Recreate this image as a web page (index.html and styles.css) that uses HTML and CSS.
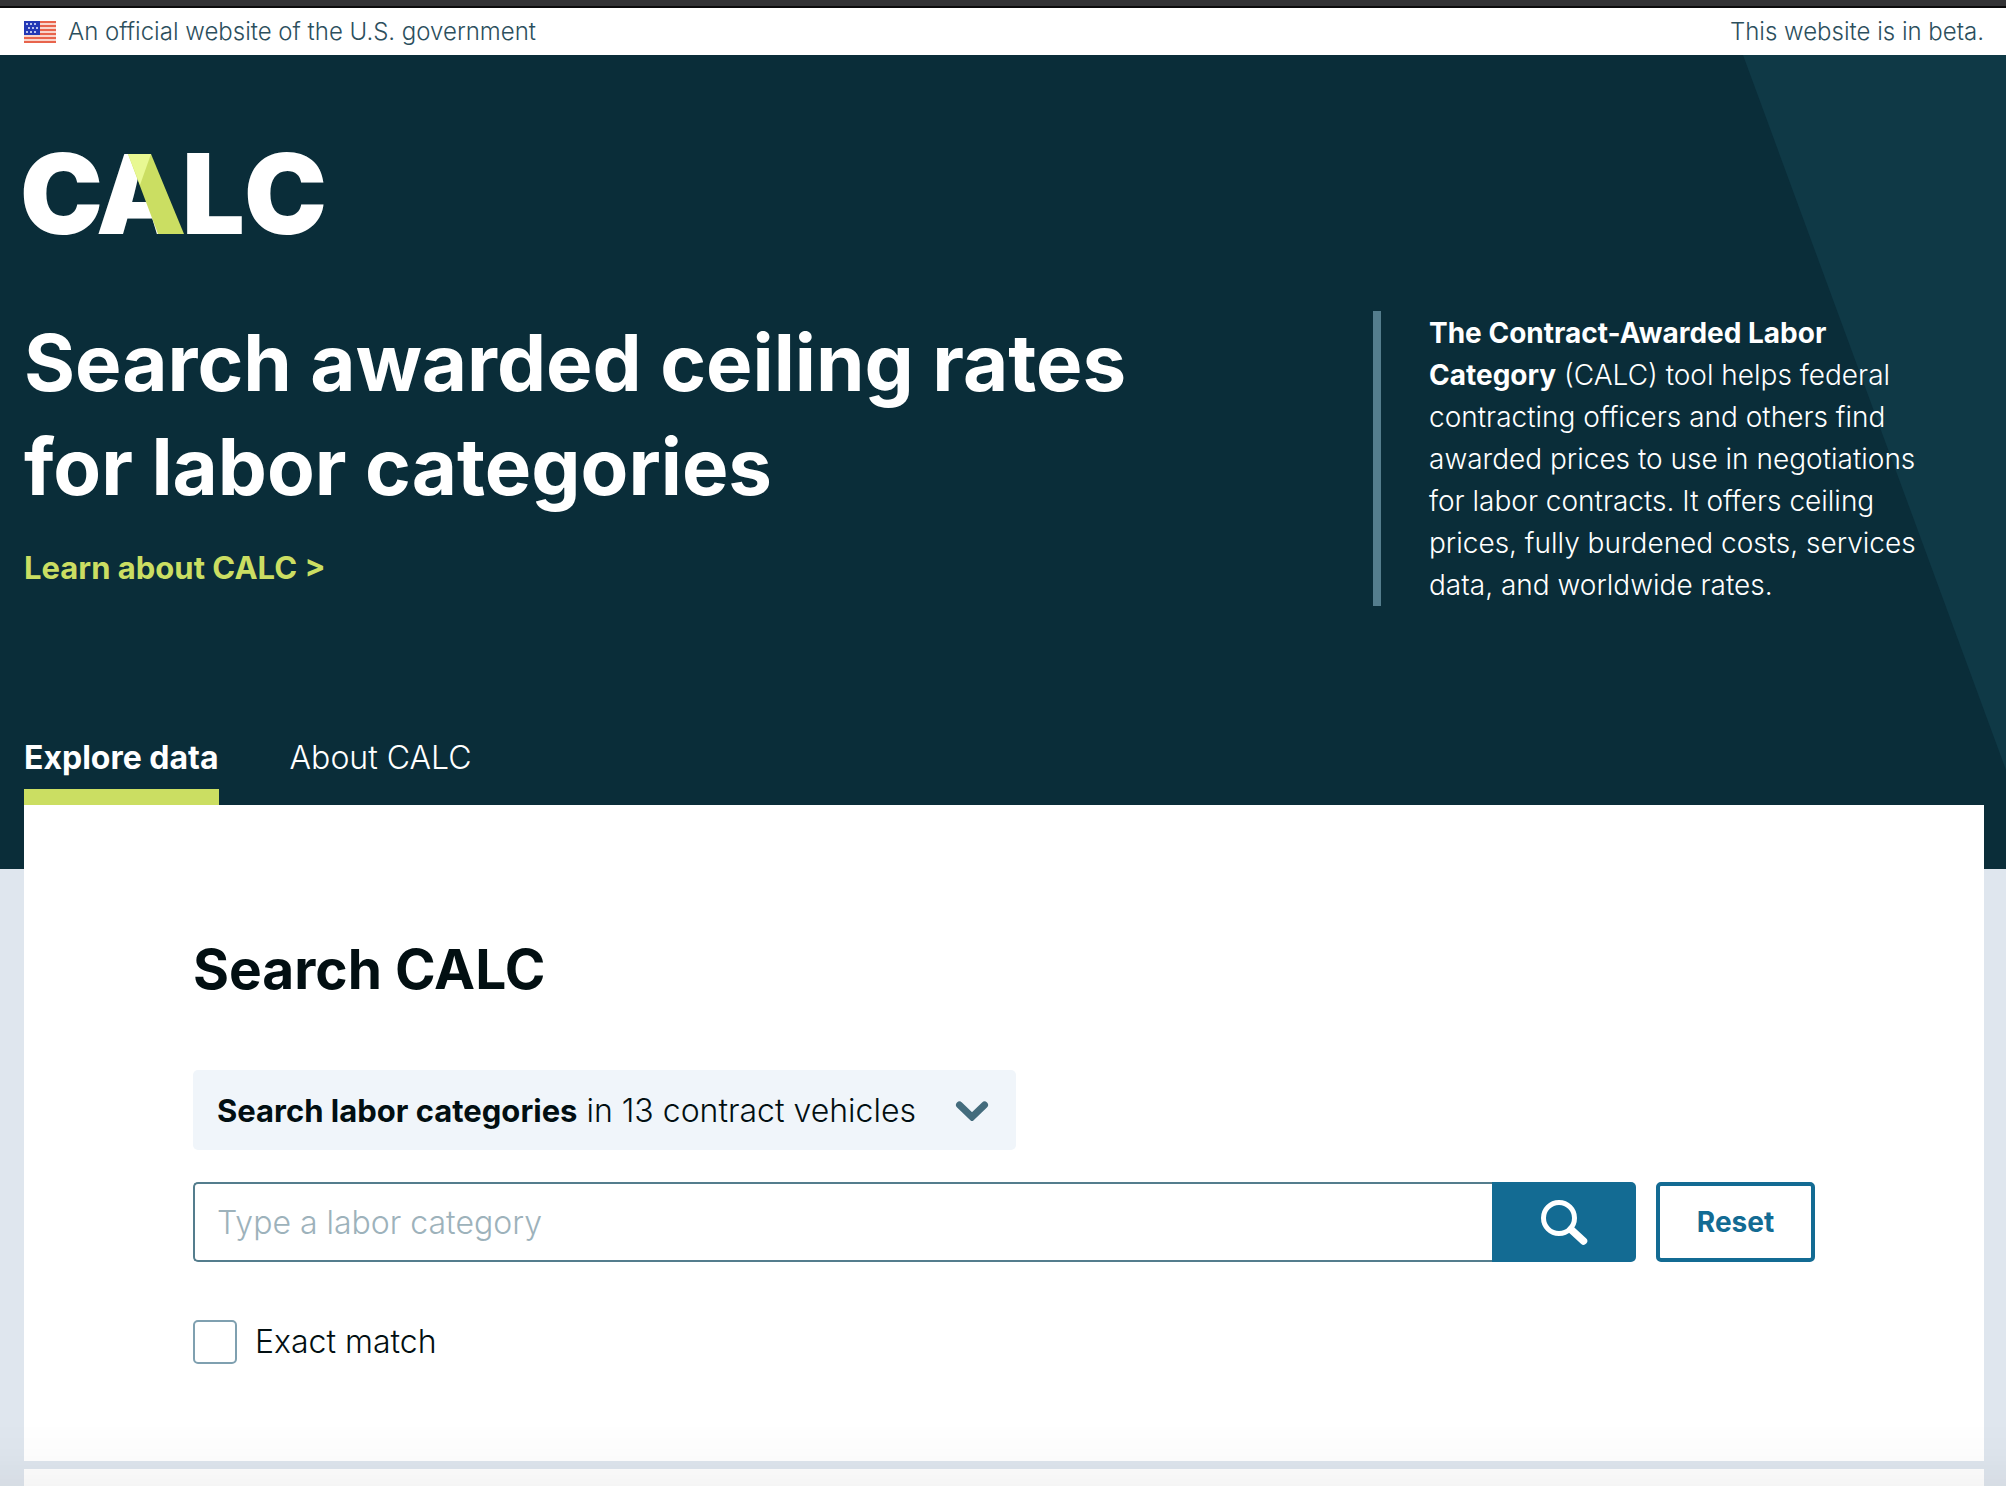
FILE: index.html
```html
<!DOCTYPE html>
<html lang="en">
<head>
<meta charset="utf-8">
<meta name="viewport" content="width=device-width, initial-scale=1">
<title>CALC</title>
<link rel="stylesheet" href="styles.css">
</head>
<body>
<div class="banner">
  <p class="banner-official">
    <svg class="flag" viewBox="0 0 32 22" aria-hidden="true">
      <rect width="32" height="22" fill="#f8d5cc"/>
      <path d="M0 1H32M0 5H32M0 9H32M0 13H32M0 17H32M0 21H32" stroke="#e8644c" stroke-width="2"/>
      <rect width="16" height="14" fill="#2338b5"/>
      <path d="M2 3H14M4 7H16M2 11H14" stroke="#b9c2ee" stroke-width="2" stroke-dasharray="2 2"/>
    </svg>
    An official website of the U.S. government
  </p>
  <p>This website is in beta.</p>
</div>

<header class="hero">
  <svg class="hero-shade" viewBox="0 0 263 715" preserveAspectRatio="none" aria-hidden="true">
    <path d="M0 0H263V715Z" fill="#0f3946"/>
  </svg>
  <svg class="logo" viewBox="0 0 302 84" role="img" aria-label="CALC">
    <clipPath id="left-leg"><path d="M60 3H106L138 88H60Z"/></clipPath>
    <g class="logo-text">
      <text x="-4" y="83">C</text>
      <text x="72" y="83" clip-path="url(#left-leg)">A</text>
      <text x="158" y="83">L</text>
      <text x="220" y="83">C</text>
    </g>
    <path d="M104 3H127L160 83H134Z" fill="#cbde62"/>
    <path d="M104 3H127L116 34Z" fill="#e8f892"/>
  </svg>
  <div class="intro">
    <div class="intro-main">
      <h1>Search awarded ceiling rates<br>for labor categories</h1>
      <a class="learn" href="#about">Learn about CALC &gt;</a>
    </div>
    <p class="summary"><strong>The Contract-Awarded Labor<br>Category</strong> (CALC) tool helps federal<br>contracting officers and others find<br>awarded prices to use in negotiations<br>for labor contracts. It offers ceiling<br>prices, fully burdened costs, services<br>data, and worldwide rates.</p>
  </div>
  <nav class="tabs" aria-label="Main">
    <a class="tab tab-active" href="#explore" aria-current="page">Explore data</a>
    <a class="tab" href="#about">About CALC</a>
  </nav>
</header>

<main class="content">
  <section class="card">
    <h2>Search CALC</h2>
    <form class="search">
      <button class="scope" type="button" aria-expanded="false">
        <span><strong>Search labor categories</strong> in 13 contract vehicles</span>
        <svg class="chevron" viewBox="0 0 34 22" aria-hidden="true">
          <path d="M4.500 6L17 18L29.500 6" fill="none" stroke="#446c7d" stroke-width="7" stroke-linecap="round"/>
        </svg>
      </button>
      <div class="search-row">
        <input class="query" type="text" aria-label="Labor category" placeholder="Type a labor category">
        <button class="submit" type="submit" aria-label="Search">
          <svg class="lens" viewBox="0 0 48 46" aria-hidden="true">
            <circle cx="19" cy="19" r="15.500" fill="none" stroke="#fff" stroke-width="5"/>
            <path d="M31 30.500L43.500 42" stroke="#fff" stroke-width="7.500" stroke-linecap="round"/>
          </svg>
        </button>
        <button class="reset" type="reset">Reset</button>
      </div>
      <label class="exact"><input type="checkbox">Exact match</label>
    </form>
  </section>
  <section class="card card-results" aria-label="Results"></section>
</main>
</body>
</html>
```
FILE: styles.css
```css
*, *::before, *::after { box-sizing: border-box; }

html { background: #dfe6ee; }

body {
  margin: 0;
  min-height: 100vh;
  display: flex;
  flex-direction: column;
  border-top: 6px solid #333335;
  font-family: Inter, "Liberation Sans", sans-serif;
  font-weight: 300;
  font-size: 32px;
  color: #020f12;
}

/* soft shade along the lower edge of the window */
body::after {
  content: "";
  position: fixed;
  inset: auto 0 0;
  height: 64px;
  background: linear-gradient(rgba(0, 0, 0, 0), rgba(0, 0, 0, 0.01) 50%, rgba(0, 0, 0, 0.04));
  pointer-events: none;
}

h1, h2, p { margin: 0; }
strong { font-weight: 700; }
button, input { font: inherit; color: inherit; }

.banner {
  display: flex;
  justify-content: space-between;
  border-top: 2px solid #0b0b0c;
  padding: 0 22px 0 24px;
  background: #fff;
  color: #2c4f5d;
  font-size: 24px;
  line-height: 47px;
}
.banner-official { display: flex; align-items: center; gap: 12px; }
.flag { width: 32px; height: 22px; }

.hero {
  position: relative;
  padding: 96px 22px 64px 24px;
  background: #0a2d39;
  color: #fff;
}
.hero > * { position: relative; }
.hero .hero-shade {
  position: absolute;
  top: 0;
  right: 0;
  width: 263px;
  height: 715px;
}
.logo { display: block; width: 302px; height: 84px; overflow: visible; }
.logo-text { fill: #fff; font-size: 111px; font-weight: 900; }

.intro {
  display: flex;
  justify-content: space-between;
  margin-top: 76px;
}
h1 { font-size: 78px; font-weight: 700; line-height: 104px; }
.learn {
  display: block;
  margin-top: 28px;
  color: #cbde62;
  font-size: 31px;
  font-weight: 700;
  line-height: 42px;
  text-decoration: none;
}
.summary {
  width: 611px;
  padding: 1px 0 0 48px;
  border-left: 8px solid #547d8d;
  font-size: 28px;
  line-height: 42px;
  white-space: nowrap;
}

.tabs { display: flex; gap: 71px; margin-top: 130px; }
.tab {
  padding-bottom: 9px;
  border-bottom: 16px solid transparent;
  color: #fff;
  line-height: 44px;
  text-decoration: none;
}
.tab-active { border-color: #cbde62; font-weight: 700; }

.content {
  position: relative;
  flex: 1;
  display: flex;
  flex-direction: column;
  gap: 8px;
  margin-top: -64px;
  padding: 0 22px 0 24px;
}
.card { padding: 128px 169px 97px; background: #fff; }
.card-results { flex: 1; padding: 0; }
h2 { font-size: 55px; font-weight: 700; line-height: 73px; }

.search { display: flex; flex-direction: column; align-items: flex-start; margin-top: 64px; }
.scope {
  display: flex;
  align-items: center;
  justify-content: space-between;
  gap: 32px;
  min-width: 823px;
  height: 80px;
  padding: 0 27px 0 24px;
  border: 0;
  border-radius: 5px;
  background: #f0f5fa;
}
.scope strong { font-size: 31px; }
.chevron { width: 34px; height: 22px; }

.search-row { display: flex; width: 100%; margin-top: 32px; }
.query {
  flex: 1;
  min-width: 0;
  height: 80px;
  padding: 0 22px;
  border: 2px solid #547d8d;
  border-right: 0;
  border-radius: 5px 0 0 5px;
  background: #fff;
}
.query::placeholder { color: #9db2bb; opacity: 1; }
.submit {
  display: grid;
  place-items: center;
  width: 144px;
  border: 0;
  border-radius: 0 5px 5px 0;
  background: #136b93;
}
.lens { width: 48px; height: 46px; }
.reset {
  width: 159px;
  margin-left: 20px;
  padding: 0;
  border: 4px solid #136b93;
  border-radius: 5px;
  background: #fff;
  color: #136b93;
  font-size: 28px;
  font-weight: 700;
}

.exact {
  display: flex;
  align-items: center;
  gap: 18px;
  margin-top: 58px;
  line-height: 44px;
}
.exact input {
  appearance: none;
  width: 44px;
  height: 44px;
  margin: 0;
  border: 2px solid #7fa0b0;
  border-radius: 5px;
  background: #fff;
}
.exact input:checked { background: #136b93; }
```
